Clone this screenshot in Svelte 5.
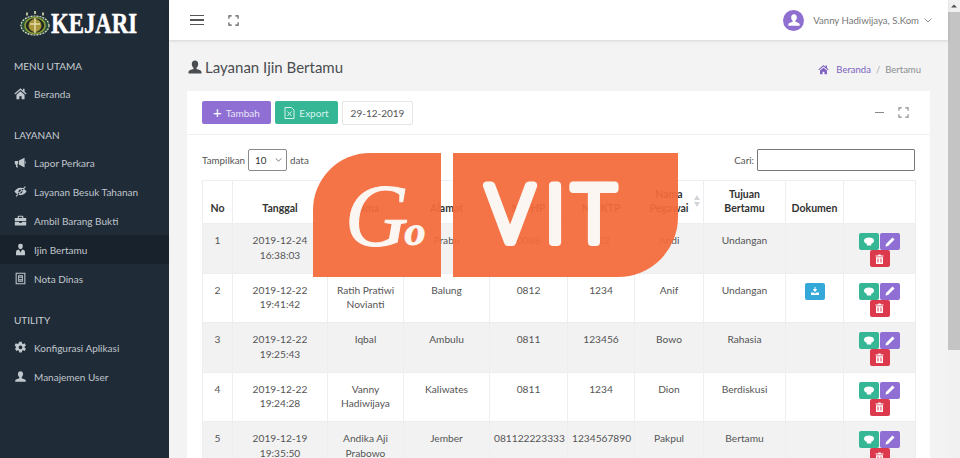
<script lang="ts">
	const icons: Record<string, string> = {
		home: 'M8 1.500 0.500 8l1 1.200L8 3.600l6.500 5.600 1-1.200-2.500-2.200V2h-2v2.200zM3 9.600V15h3.600v-3.600h2.800V15H13V9.600L8 5.300z',
		bullhorn: 'M1 6h4v4H4l.8 4H3l-1-4H1zM6 5.600 13 2v12L6 10.400zM14 6.200c1.200.4 1.200 3.200 0 3.600z',
		eye: 'M8 3.500C4.500 3.500 2 6 .5 8 2 10 4.500 12.500 8 12.500S14 10 15.500 8C14 6 11.500 3.500 8 3.500zm0 2a2.500 2.500 0 1 1 0 5 2.500 2.500 0 0 1 0-5zM13.500 1.500 2 13.500l1 1L14.500 2.500z',
		case: 'M5.500 2h5l1 1v2H15v3.500H1V5h3.500V3zm.5 1.500V5h4V3.500zM1 9.500h5.500V11h3V9.500H15V14H1z',
		tie: 'M8 1a2.800 2.800 0 0 1 2.800 3C10.800 6 9.500 7.500 8 7.500S5.200 6 5.200 4A2.800 2.800 0 0 1 8 1zM2.500 15v-4c0-1.800 1.500-2.800 3.500-3l1.300 2.200L8 12l.7-1.800L10 8c2 .2 3.500 1.200 3.500 3v4z',
		file: 'M2 1h12v14H2zm1.300 1.300v11.400h9.400V2.300zM5 4h6v8H5zm1 1.500v1h4v-1zm0 2v1h4v-1zm0 2v1h4v-1z',
		cog: 'M6.500 1h3l.4 2 1.400.7 1.900-.9 1.500 2.600-1.600 1.300v1.600l1.600 1.300-1.500 2.600-1.900-.9-1.400.7-.4 2h-3l-.4-2-1.400-.7-1.900.9-1.500-2.600L2.300 8.300V6.700L.7 5.400l1.500-2.600 1.900.9 1.400-.7zM8 5.500a2.300 2.300 0 1 0 0 4.600 2.300 2.300 0 0 0 0-4.600z',
		user: 'M8 1.500c2 0 3.200 1.500 3.200 3.500 0 1.600-.8 3.100-1.700 3.800v1.200c2 .6 5 1.300 5 3V14.500h-13V13c0-1.700 3-2.400 5-3V8.800C5.600 8.100 4.800 6.600 4.800 5c0-2 1.200-3.500 3.200-3.500z'
	};

	const menu = [
		{ label: 'MENU UTAMA', items: [{ name: 'Beranda', icon: 'home' }] },
		{
			label: 'LAYANAN',
			items: [
				{ name: 'Lapor Perkara', icon: 'bullhorn' },
				{ name: 'Layanan Besuk Tahanan', icon: 'eye' },
				{ name: 'Ambil Barang Bukti', icon: 'case' },
				{ name: 'Ijin Bertamu', icon: 'tie', active: true },
				{ name: 'Nota Dinas', icon: 'file' }
			]
		},
		{
			label: 'UTILITY',
			items: [
				{ name: 'Konfigurasi Aplikasi', icon: 'cog' },
				{ name: 'Manajemen User', icon: 'user' }
			]
		}
	];

	const columns = [
		{ name: 'No', width: 30 },
		{ name: 'Tanggal', width: 95 },
		{ name: 'Nama', width: 76 },
		{ name: 'Alamat', width: 86 },
		{ name: 'No. HP', width: 78 },
		{ name: 'No. KTP', width: 67 },
		{ name: 'Nama\nPegawai', width: 69, sort: true },
		{ name: 'Tujuan\nBertamu', width: 82 },
		{ name: 'Dokumen', width: 58 },
		{ name: '', width: 72 }
	];

	const rows = [
		{ no: 1, date: '2019-12-24', time: '16:38:03', nama: '', alamat: 'Prabu', hp: '0088', ktp: '122', pegawai: 'Andi', tujuan: 'Undangan', doc: false },
		{ no: 2, date: '2019-12-22', time: '19:41:42', nama: 'Ratih Pratiwi Novianti', alamat: 'Balung', hp: '0812', ktp: '1234', pegawai: 'Anif', tujuan: 'Undangan', doc: true },
		{ no: 3, date: '2019-12-22', time: '19:25:43', nama: 'Iqbal', alamat: 'Ambulu', hp: '0811', ktp: '123456', pegawai: 'Bowo', tujuan: 'Rahasia', doc: false },
		{ no: 4, date: '2019-12-22', time: '19:24:28', nama: 'Vanny Hadiwijaya', alamat: 'Kaliwates', hp: '0811', ktp: '1234', pegawai: 'Dion', tujuan: 'Berdiskusi', doc: false },
		{ no: 5, date: '2019-12-19', time: '19:35:50', nama: 'Andika Aji Prabowo', alamat: 'Jember', hp: '081122223333', ktp: '1234567890', pegawai: 'Pakpul', tujuan: 'Bertamu', doc: false }
	];
</script>

{#snippet icon(name: string, size = 13)}
	<svg class="glyph" width={size} height={size} viewBox="0 0 16 16" fill="currentColor"><path fill-rule="evenodd" d={icons[name]} /></svg>
{/snippet}

{#snippet expand()}
	<svg width="11" height="11" viewBox="0 0 12 12" fill="none" stroke="currentColor" stroke-width="1.200"><path d="M1 4V1h3M8 1h3v3M11 8v3H8M4 11H1V8" /></svg>
{/snippet}

<div class="app">
	<aside class="sidebar">
		<div class="brand">
			<svg width="32" height="26" viewBox="0 0 32 26">
				<ellipse cx="16" cy="15.500" rx="14" ry="9.500" fill="#27513a" stroke="#dfe3c8" stroke-width="1.200" stroke-dasharray="2 1" />
				<ellipse cx="16" cy="15.500" rx="10" ry="8" fill="#1f2b1f" stroke="#8f9a3c" stroke-width="1.500" />
				<ellipse cx="16" cy="15.500" rx="6.500" ry="6.500" fill="#a8963a" />
				<path d="M16 8v15M11 14h10" stroke="#e3dca8" stroke-width="1.500" />
				<path d="M8 2.500v3M16 1v3M24 2.500v3" stroke="#b9bd98" stroke-width="2" />
			</svg>
			<span>KEJARI</span>
		</div>
		{#each menu as group}
			<section class="group">
				<h4>{group.label}</h4>
				{#each group.items as item}
					<a class="item" class:active={item.active} href="#/">
						{@render icon(item.icon)}
						<span>{item.name}</span>
					</a>
				{/each}
			</section>
		{/each}
	</aside>

	<div class="main">
		<header class="topbar">
			<div class="burger"><i></i><i></i><i></i></div>
			<div class="top-expand">{@render expand()}</div>
			<div class="account">
				<span class="avatar">{@render icon('user', 14)}</span>
				<span>Vanny Hadiwijaya, S.Kom</span>
				<svg width="8" height="5" viewBox="0 0 8 5" fill="none" stroke="#8a8a8a"><path d="M.5.5 4 4 7.500.5" /></svg>
			</div>
		</header>

		<div class="content">
			<div class="page-head">
				<h1>{@render icon('user', 16)} Layanan Ijin Bertamu</h1>
				<nav class="crumbs">
					{@render icon('home', 11)}
					<a href="#/">Beranda</a>
					<span class="sep">/</span>
					<span>Bertamu</span>
				</nav>
			</div>

			<div class="card">
				<div class="card-head">
					<button class="btn purple"><b class="plus">+</b> Tambah</button>
					<button class="btn green">
						<svg width="11" height="12" viewBox="0 0 11 12" fill="none" stroke="currentColor"><path d="M1 .5h6.500L10 3v8.500H1z" /><path d="M3.500 4.500l4 4.500M7.500 4.500l-4 4.500" /></svg>
						Export
					</button>
					<div class="date">29-12-2019</div>
					<div class="tools">
						<i class="dash"></i>
						{@render expand()}
					</div>
				</div>

				<div class="card-body">
					<div class="filters">
						<label>Tampilkan
							<span class="select">10
								<svg width="7" height="4" viewBox="0 0 8 5" fill="none" stroke="#555"><path d="M.5.5 4 4 7.500.5" /></svg>
							</span>
							data</label>
						<label>Cari: <span class="search"></span></label>
					</div>

					<table>
						<colgroup>
							{#each columns as col}
								<col style="width: {col.width}px" />
							{/each}
						</colgroup>
						<thead>
							<tr>
								{#each columns as col}
									<th>{col.name}{#if col.sort}<svg class="sort" width="6" height="12" viewBox="0 0 6 12" fill="#d4d4d8"><path d="M3 0 6 5H0zM3 12 0 7h6z" /></svg>{/if}</th>
								{/each}
							</tr>
						</thead>
						<tbody>
							{#each rows as row}
								<tr>
									<td>{row.no}</td>
									<td>{row.date}<br />{row.time}</td>
									<td>{row.nama}</td>
									<td>{row.alamat}</td>
									<td>{row.hp}</td>
									<td>{row.ktp}</td>
									<td>{row.pegawai}</td>
									<td>{row.tujuan}</td>
									<td>
										{#if row.doc}
											<span class="act blue">
												<svg width="10" height="10" viewBox="0 0 10 10" fill="#fff"><path d="M5 1v4M3.500 3.500 5 5.500l1.500-2z" stroke="#fff" /><path d="M1 6.500h2.500L5 7.500l1.500-1H9V9H1z" /></svg>
											</span>
										{/if}
									</td>
									<td>
										<div class="actions">
											<span class="act green">
												<svg width="10" height="9" viewBox="0 0 10 9" fill="#fff"><path d="M0 3.500C0 1.500 2.200.5 5 .5s5 1 5 3-1.500 3-2.500 3L7 8.500H3L2.500 6.500C1.500 6.500 0 5.500 0 3.500z" /></svg>
											</span>
											<span class="act purple">
												<svg width="10" height="10" viewBox="0 0 10 10" fill="#fff"><path d="M7.500.5 9.500 2.500 3 9 .5 9.500 1 7z" /></svg>
											</span>
											<span class="act red">
												<svg width="9" height="10" viewBox="0 0 9 10" fill="#fff"><path d="M.5 1.500h2.500l.5-1h2l.5 1h2.500v1H.5zM1 3.200h7V10H1zm1.500 1.300v4h1v-4zm3 0v4h1v-4z" fill-rule="evenodd" /></svg>
											</span>
										</div>
									</td>
								</tr>
							{/each}
						</tbody>
					</table>
				</div>
			</div>
		</div>
	</div>

	<div class="scrollbar">
		<svg width="12" height="12" viewBox="0 0 12 12" fill="#505050"><path d="M3 7.500 6 4.500 9 7.500z" /></svg>
		<div class="thumb"></div>
	</div>

	<div class="watermark">
		<div class="wm-left">
			<svg width="128" height="124" viewBox="0 0 128 124">
				<text class="go" x="32" y="92">G<tspan class="go-o" dx="-4">o</tspan></text>
			</svg>
		</div>
		<div class="wm-right">
			<svg width="225" height="124" viewBox="0 0 225 124">
				<text class="vit" y="89"><tspan x="34">V</tspan><tspan x="92">I</tspan><tspan x="120">T</tspan></text>
			</svg>
		</div>
	</div>
</div>

<style>
	:global(body) {
		margin: 0;
		font-family: Lato, sans-serif;
	}

	.app {
		position: relative;
		display: flex;
		width: 960px;
		height: 458px;
		overflow: hidden;
		font-size: 10.200px;
		color: #676a6c;
	}

	.glyph {
		flex: none;
	}

	.sidebar {
		flex: none;
		width: 169px;
		background: #1f2b37;
		color: #c8ced3;
		font-size: 10px;
	}

	.brand {
		display: flex;
		align-items: center;
		height: 45px;
		padding: 0 0 0 19px;
		color: #fff;
		font: bold 30px 'Liberation Serif', serif;
	}

	.brand span {
		display: inline-block;
		transform: scaleX(0.76);
		transform-origin: left center;
		-webkit-text-stroke: 0.5px #fff;
	}

	.group {
		padding-top: 9px;
	}

	.group h4 {
		margin: 0;
		padding: 0 14px;
		height: 25px;
		line-height: 24px;
		font-size: 10px;
		font-weight: 400;
		color: #c8ced3;
	}

	.group + .group {
		padding-top: 15px;
	}

	.item {
		display: flex;
		align-items: center;
		gap: 7px;
		height: 29px;
		padding-left: 14px;
		color: #c0c7cd;
		text-decoration: none;
	}

	.item.active {
		background: #18222c;
	}

	.main {
		flex: 1;
		min-width: 0;
		display: flex;
		flex-direction: column;
		background: #f3f3f4;
	}

	.topbar {
		flex: none;
		display: flex;
		align-items: center;
		height: 40px;
		padding: 0 16px 0 21px;
		background: #fff;
		box-shadow: 0 1px 3px rgba(0, 0, 0, 0.12);
		position: relative;
	}

	.burger {
		display: flex;
		flex-direction: column;
		gap: 3px;
		width: 14px;
	}

	.burger i {
		height: 1.500px;
		background: #555;
	}

	.top-expand {
		display: flex;
		margin-left: 24px;
		color: #555;
	}

	.account {
		display: flex;
		align-items: center;
		gap: 5px;
		margin-left: auto;
		color: #777;
		font-size: 9.600px;
	}

	.avatar {
		display: flex;
		align-items: center;
		justify-content: center;
		width: 21px;
		height: 21px;
		margin-right: 4px;
		border-radius: 50%;
		background: #8f70d0;
		color: #fff;
	}

	.content {
		flex: 1;
		padding: 0 18px;
	}

	.page-head {
		display: flex;
		align-items: center;
		justify-content: space-between;
		height: 51px;
		padding-right: 9px;
	}

	h1 {
		display: flex;
		align-items: center;
		gap: 2px;
		margin: 3px 0 0;
		font-size: 15px;
		font-weight: 400;
		color: #4a4d50;
	}

	.crumbs {
		display: flex;
		align-items: center;
		gap: 5px;
		margin-top: 8px;
		font-size: 9.500px;
		color: #8a8d90;
	}

	.crumbs :global(svg) {
		color: #7c5fc0;
		margin-right: 2px;
	}

	.crumbs a {
		color: #7c5fc0;
		text-decoration: none;
	}

	.sep {
		color: #aaa;
	}

	.card {
		background: #fff;
		margin-bottom: 20px;
	}

	.card-head {
		display: flex;
		align-items: center;
		gap: 4px;
		height: 43px;
		padding: 0 21px 0 15px;
		border-bottom: 1px solid #f0f0f0;
		font-size: 10px;
	}

	.btn {
		display: flex;
		align-items: center;
		justify-content: center;
		gap: 4px;
		height: 23px;
		padding: 0;
		border: 0;
		border-radius: 2px;
		font: inherit;
		color: #e9e4f7;
	}

	.btn.purple {
		width: 69px;
		background: #8f6fd4;
	}

	.btn.green {
		width: 63px;
		background: #35b796;
		color: #d6f4ec;
	}

	.plus {
		font-size: 15px;
		font-weight: 400;
		line-height: 1;
		color: #fff;
	}

	.date {
		display: flex;
		align-items: center;
		justify-content: center;
		width: 69px;
		height: 22px;
		border: 1px solid #e6e6e6;
		border-radius: 2px;
		color: #555;
	}

	.tools {
		display: flex;
		align-items: center;
		gap: 14px;
		margin-left: auto;
		color: #888;
	}

	.dash {
		width: 9px;
		height: 1.500px;
		background: #888;
	}

	.card-body {
		padding: 14px 15px 0;
	}

	.filters {
		display: flex;
		align-items: center;
		justify-content: space-between;
		height: 22px;
		margin-bottom: 9px;
		font-size: 9.800px;
	}

	.filters label {
		display: flex;
		align-items: center;
		gap: 3px;
		color: #555;
	}

	.select {
		display: flex;
		align-items: center;
		justify-content: space-between;
		box-sizing: border-box;
		width: 39px;
		height: 22px;
		padding: 0 4px 0 6px;
		border: 1px solid #8a8a8a;
		border-radius: 2px;
		color: #333;
	}

	.search {
		box-sizing: border-box;
		width: 158px;
		height: 22px;
		border: 1px solid #777;
		border-radius: 1px;
	}

	table {
		table-layout: fixed;
		width: 713px;
		border-collapse: collapse;
		text-align: center;
		color: #555;
	}

	th,
	td {
		border: 1px solid #eceef1;
	}

	th {
		position: relative;
		height: 43px;
		padding: 0 3px 8px;
		font-size: 10.500px;
		font-weight: 700;
		color: #333;
		line-height: 14px;
		vertical-align: bottom;
		box-sizing: border-box;
		white-space: pre-line;
	}

	.sort {
		position: absolute;
		right: 3px;
		top: 14px;
	}

	td {
		height: 49.500px;
		padding: 9px 4px 0;
		box-sizing: border-box;
		vertical-align: top;
		line-height: 14.500px;
	}

	tbody tr:nth-child(odd) {
		background: #f2f2f3;
	}

	.actions {
		display: flex;
		flex-wrap: wrap;
		justify-content: center;
		gap: 0 1px;
		width: 42px;
		margin: 0 auto;
	}

	.act {
		display: inline-flex;
		align-items: center;
		justify-content: center;
		width: 20px;
		height: 17px;
		border-radius: 2px;
		vertical-align: top;
	}

	.act.green {
		background: #35b796;
	}

	.act.purple {
		background: #8f6fd4;
	}

	.act.red {
		background: #dc3a4c;
	}

	.act.blue {
		background: #34a9d9;
	}

	.scrollbar {
		flex: none;
		display: flex;
		flex-direction: column;
		width: 12px;
		background: #f1f1f1;
	}

	.thumb {
		height: 338px;
		background: #c4c4c4;
	}

	.watermark {
		position: absolute;
		left: 313px;
		top: 153px;
		display: flex;
		gap: 12px;
		height: 124px;
	}

	.wm-left,
	.wm-right {
		background: rgba(243, 107, 60, 0.94);
	}

	.wm-left {
		width: 128px;
		border-top-left-radius: 57px;
	}

	.wm-right {
		width: 225px;
		border-bottom-right-radius: 60px;
	}

	.go {
		font: italic 88px 'Liberation Serif', serif;
		fill: #fbf6f1;
		stroke: #fbf6f1;
		stroke-width: 1px;
	}

	.go-o {
		font-size: 42px;
		font-weight: 700;
	}

	.vit {
		font: 300 80px 'Open Sans', sans-serif;
		fill: #fbf6f1;
		stroke: #fbf6f1;
		stroke-width: 8px;
		stroke-linejoin: round;
	}
</style>
